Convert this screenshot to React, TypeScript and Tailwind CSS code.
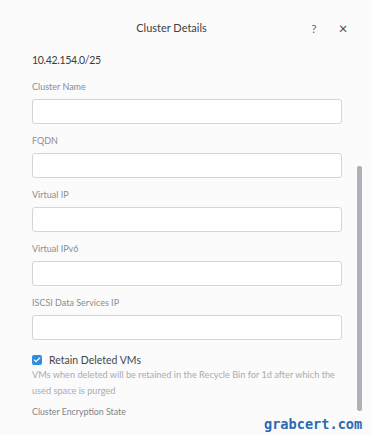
import { Check } from "lucide-react";

const fields = ["Cluster Name", "FQDN", "Virtual IP", "Virtual IPv6", "ISCSI Data Services IP"];

export default function App() {
  return (
    <div className="relative w-[372px] h-[435px] overflow-hidden bg-[#fbfbfb] font-['Lato',sans-serif]">
      {/* header */}
      <div className="flex items-center h-[56px] pt-[1px]">
        <div className="flex-1 text-center pl-[36px] text-[11px] text-[#3d3f44]">Cluster Details</div>
        <div className="w-[14px] text-center text-[12px] text-[#6a6d73] mr-[15px]">?</div>
        <div className="w-[14px] text-center text-[15px] leading-none text-[#4a4d52] mr-[22px]">×</div>
      </div>

      <div className="pl-[32px] pr-[30px]">
        <div className="text-[10.5px] tracking-[-0.3px] text-[#3a3c40] leading-[14px] mt-[-3px]">10.42.154.0/25</div>

        <div className="mt-[14px] flex flex-col gap-[11px]">
          {fields.map((f) => (
            <div key={f}>
              <div className="text-[9px] text-[#8a8d92] leading-[11px] mb-[7px]">{f}</div>
              <div className="h-[25px] bg-white border border-[#d3d5d9] rounded-[3px]" />
            </div>
          ))}
        </div>

        <div className="flex items-center mt-[13px]">
          <div className="w-[10px] h-[10px] rounded-[2px] bg-[#2f8ee0] flex items-center justify-center">
            <Check size={8} strokeWidth={3.5} color="white" />
          </div>
          <div className="ml-[7px] text-[10.5px] text-[#45474c] leading-[14px]">Retain Deleted VMs</div>
        </div>
        <div className="text-[9.2px] leading-[16px] text-[#a9abb0] pr-[4px]">
          VMs when deleted will be retained in the Recycle Bin for 1d after which the used space is purged
        </div>
        <div className="mt-[7px] text-[8.8px] leading-[12px] text-[#7f8287]">Cluster Encryption State</div>
      </div>

      {/* scrollbar */}
      <div className="absolute left-[357px] top-[166px] w-[5px] h-[245px] rounded-[2px] bg-[#aeb1b8]" />

      {/* watermark */}
      <div className="absolute left-[264px] top-[414px] text-[13.6px] font-bold text-[#2c6ab2] font-['DejaVu_Sans_Mono',monospace]">
        grabcert.com
      </div>
    </div>
  );
}
